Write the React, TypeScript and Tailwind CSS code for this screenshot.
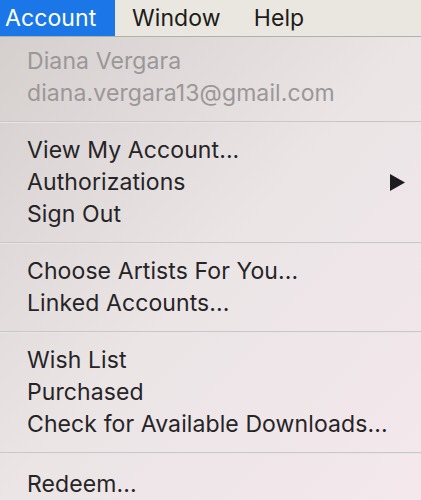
import React from 'react'

type MenuEntry = { label: string; submenu?: boolean }

const sections: MenuEntry[][] = [
  [
    { label: 'View My Account...' },
    { label: 'Authorizations', submenu: true },
    { label: 'Sign Out' }
  ],
  [{ label: 'Choose Artists For You...' }, { label: 'Linked Accounts...' }],
  [
    { label: 'Wish List' },
    { label: 'Purchased' },
    { label: 'Check for Available Downloads...' }
  ],
  [{ label: 'Redeem...' }]
]

const Separator = ({ last }: { last?: boolean }) => (
  <div
    className={
      last
        ? 'mt-[12px] mb-[14px] h-[2px] bg-[#cbc6c7] border-b border-[#e9e4e5]'
        : 'mt-[12px] mb-[11px] h-[2px] bg-[#cbc6c7] border-b border-[#e9e4e5]'
    }
  />
)

const MenuItem = ({ label, submenu }: MenuEntry) => (
  <div className="flex h-[32px] items-center justify-between pl-[27px] pr-[16px] text-[#262426]">
    <span>{label}</span>
    {submenu && (
      <svg width="15" height="17" viewBox="0 0 15 17" className="mt-[1px]">
        <path d="M0 0 L15 8.5 L0 17 Z" fill="#1e1c1e" />
      </svg>
    )}
  </div>
)

const App = () => {
  return (
    <div className="h-[500px] w-[421px] overflow-hidden font-['Inter','Liberation_Sans',Arial,sans-serif] text-[23px] tracking-[0.1px]">
      {/* menu bar */}
      <div className="flex h-[37px] items-center border-b border-[#b4b0a9] bg-[#e9e7df] text-[23px] tracking-[0.1px] text-[#1d1c1b]">
        <div className="flex h-full w-[115px] items-center bg-[#1b77e8] pl-[5px] text-white">
          Account
        </div>
        <span className="ml-[17px]">Window</span>
        <span className="ml-[33px]">Help</span>
      </div>

      {/* dropdown */}
      <div className="h-[463px] bg-linear-to-br from-[#d5d0ce] via-[#ebe5e6] to-[#f4e8ec] pt-[8px]">
        <div className="flex h-[32px] items-center pl-[27px] text-[#9b9798]">Diana Vergara</div>
        <div className="flex h-[32px] items-center pl-[27px] text-[#9b9798]">
          diana.vergara13@gmail.com
        </div>
        {sections.map((items, i) => (
          <div key={i}>
            <Separator last={i === sections.length - 1} />
            {items.map((item) => (
              <MenuItem key={item.label} {...item} />
            ))}
          </div>
        ))}
      </div>
    </div>
  )
}

export default App
